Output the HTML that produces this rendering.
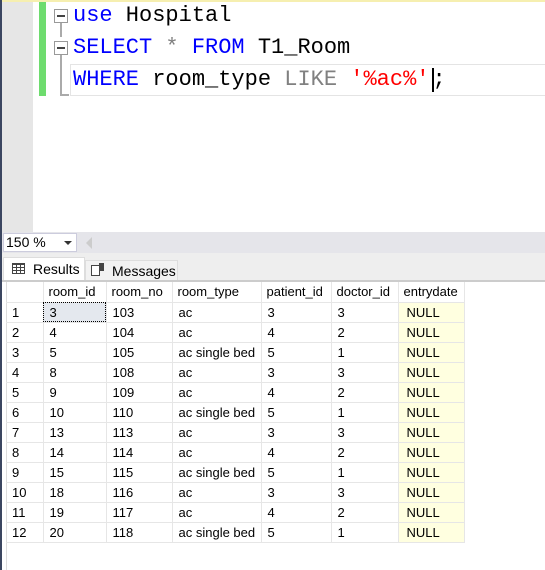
<!DOCTYPE html>
<html><head><style>
*{margin:0;padding:0;box-sizing:border-box}
body{width:545px;height:570px;overflow:hidden;background:#fff;position:relative;font-family:"Liberation Sans",sans-serif}
.abs{position:absolute}
.code{position:absolute;left:73px;font-family:"Liberation Mono",monospace;font-size:22px;line-height:32px;white-space:pre;color:#000}
.k{color:#0000ff}.g{color:#808080}.r{color:#ff0000}
.fold{position:absolute;left:54px;width:14px;height:14px;border:1px solid #999;background:#fff}
.fold:after{content:"";position:absolute;left:2px;top:5px;width:8px;height:2px;background:#444}
table{position:absolute;left:6px;top:282px;border-collapse:collapse;font-size:13px;color:#000;table-layout:fixed}
td{height:20px;border-right:1px solid #e6e6e6;border-bottom:1px solid #e6e6e6;padding:0 0 0 6px;white-space:nowrap;overflow:hidden;line-height:19px}
tr.h td{padding-left:5px}
td.n{background:#ffffe0;padding-left:8px}
</style></head><body>
<div class="abs" style="left:0;top:0;width:545px;height:2px;background:#f6efb0"></div>
<div class="abs" style="left:0;top:0;width:2px;height:570px;background:#3b4660"></div>
<div class="abs" style="left:2px;top:2px;width:31px;height:230px;background:#e6e6e6"></div>
<div class="abs" style="left:39px;top:2px;width:7px;height:94px;background:#6edc6e"></div>
<div class="abs" style="left:60px;top:23px;width:2px;height:14px;background:#aaa"></div>
<div class="abs" style="left:60px;top:55px;width:2px;height:40px;background:#aaa"></div>
<div class="abs" style="left:60px;top:94px;width:9px;height:2px;background:#aaa"></div>
<div class="abs" style="left:70px;top:64px;width:475px;height:32px;border:1px solid #e4e4e4;border-right:none"></div>
<div class="fold" style="top:9px"></div>
<div class="fold" style="top:41px"></div>
<div class="code" style="top:0"><span class="k">use</span> Hospital</div>
<div class="code" style="top:32px"><span class="k">SELECT</span> <span class="g">*</span> <span class="k">FROM</span> T1_Room</div>
<div class="code" style="top:64px"><span class="k">WHERE</span> room_type <span class="g">LIKE</span> <span class="r">'%ac%'</span><span style="margin-left:3px">;</span></div>
<div class="abs" style="left:432px;top:68px;width:2px;height:24px;background:#000"></div>
<div class="abs" style="left:2px;top:232px;width:543px;height:21px;background:#e5e5ea"></div>
<div class="abs" style="left:3px;top:233px;width:74px;height:19px;background:#fff;border:1px solid #ccd;font-size:14px;line-height:17px;padding-left:2px">150 %</div>
<div class="abs" style="left:64px;top:241px;border-left:4px solid transparent;border-right:4px solid transparent;border-top:4px solid #333"></div>
<div class="abs" style="left:86px;top:237px;border-top:6px solid transparent;border-bottom:6px solid transparent;border-right:6px solid #ccc"></div>
<div class="abs" style="left:2px;top:253px;width:543px;height:27px;background:#eee"></div>
<div class="abs" style="left:3px;top:257px;width:82px;height:24px;background:#fff;border:1px solid #ddd;border-bottom:none;font-size:14px;line-height:22px;padding-left:29px">Results</div>
<div class="abs" style="left:12px;top:263px;width:13px;height:11px;border:1px solid #444;background:repeating-linear-gradient(90deg,transparent 0 3px,#444 3px 4px),repeating-linear-gradient(0deg,transparent 0 2px,#444 2px 3px)"></div>
<div class="abs" style="left:85px;top:260px;width:93px;height:20px;background:#f2f2f2;border:1px solid #ddd;border-bottom:none;font-size:14px;line-height:20px;padding-left:26px">Messages</div>
<div class="abs" style="left:91px;top:265px;width:9px;height:11px;border:1px solid #444;background:#fff"></div>
<div class="abs" style="left:99px;top:263px;width:5px;height:8px;background:#444"></div>
<div class="abs" style="left:2px;top:280px;width:543px;height:2px;background:#ccc"></div>
<div class="abs" style="left:6px;top:282px;width:1px;height:288px;background:#ddd"></div>
<table>
<colgroup><col style="width:37px"><col style="width:63px"><col style="width:66px"><col style="width:89px"><col style="width:70px"><col style="width:67px"><col style="width:66px"></colgroup>
<tr class="h"><td></td><td>room_id</td><td>room_no</td><td>room_type</td><td>patient_id</td><td>doctor_id</td><td>entrydate</td></tr>
<tr><td>1</td><td style="background:#e4e8ee;outline:1px dotted #000;outline-offset:-1px">3</td><td>103</td><td>ac</td><td>3</td><td>3</td><td class="n">NULL</td></tr>
<tr><td>2</td><td>4</td><td>104</td><td>ac</td><td>4</td><td>2</td><td class="n">NULL</td></tr>
<tr><td>3</td><td>5</td><td>105</td><td>ac single bed</td><td>5</td><td>1</td><td class="n">NULL</td></tr>
<tr><td>4</td><td>8</td><td>108</td><td>ac</td><td>3</td><td>3</td><td class="n">NULL</td></tr>
<tr><td>5</td><td>9</td><td>109</td><td>ac</td><td>4</td><td>2</td><td class="n">NULL</td></tr>
<tr><td>6</td><td>10</td><td>110</td><td>ac single bed</td><td>5</td><td>1</td><td class="n">NULL</td></tr>
<tr><td>7</td><td>13</td><td>113</td><td>ac</td><td>3</td><td>3</td><td class="n">NULL</td></tr>
<tr><td>8</td><td>14</td><td>114</td><td>ac</td><td>4</td><td>2</td><td class="n">NULL</td></tr>
<tr><td>9</td><td>15</td><td>115</td><td>ac single bed</td><td>5</td><td>1</td><td class="n">NULL</td></tr>
<tr><td>10</td><td>18</td><td>116</td><td>ac</td><td>3</td><td>3</td><td class="n">NULL</td></tr>
<tr><td>11</td><td>19</td><td>117</td><td>ac</td><td>4</td><td>2</td><td class="n">NULL</td></tr>
<tr><td>12</td><td>20</td><td>118</td><td>ac single bed</td><td>5</td><td>1</td><td class="n">NULL</td></tr>
</table>
</body></html>
